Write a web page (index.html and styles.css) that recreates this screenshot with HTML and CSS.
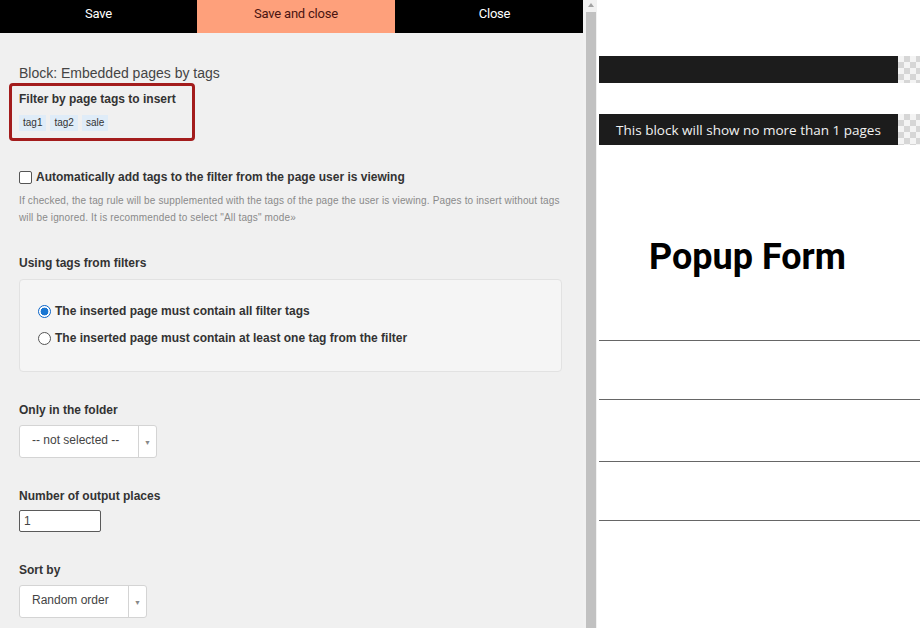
FILE: index.html
```html
<!DOCTYPE html>
<html>
<head>
<meta charset="utf-8">
<link rel="stylesheet" href="styles.css">
</head>
<body>
<div class="app">
  <div class="editor">
    <div class="toolbar">
      <div class="tb-btn">Save</div>
      <div class="tb-btn tb-accent">Save and close</div>
      <div class="tb-btn tb-close">Close</div>
    </div>
    <div class="content">
      <div class="block-title">Block: Embedded pages by tags</div>
      <div class="filter-box">
        <div class="label">Filter by page tags to insert</div>
        <div class="tags">
          <span class="tag">tag1</span>
          <span class="tag">tag2</span>
          <span class="tag">sale</span>
        </div>
      </div>

      <label class="check-row">
        <span class="checkbox"></span>
        <span class="label">Automatically add tags to the filter from the page user is viewing</span>
      </label>
      <p class="hint">If checked, the tag rule will be supplemented with the tags of the page the user is viewing. Pages to insert without tags will be ignored. It is recommended to select "All tags" mode»</p>

      <div class="label section-label">Using tags from filters</div>
      <div class="radio-box">
        <div class="radio-row">
          <span class="radio radio-on"></span>
          <span class="label">The inserted page must contain all filter tags</span>
        </div>
        <div class="radio-row">
          <span class="radio"></span>
          <span class="label">The inserted page must contain at least one tag from the filter</span>
        </div>
      </div>

      <div class="label field-label">Only in the folder</div>
      <div class="select select-folder">
        <span class="select-text">-- not selected --</span>
        <span class="select-arrow">▼</span>
      </div>

      <div class="label field-label">Number of output places</div>
      <div class="num-input">1</div>

      <div class="label field-label">Sort by</div>
      <div class="select select-sort">
        <span class="select-text">Random order</span>
        <span class="select-arrow">▼</span>
      </div>
    </div>
  </div>

  <div class="scrollbar">
    <div class="sb-arrow"></div>
    <div class="sb-thumb"></div>
  </div>

  <div class="preview">
    <div class="pv-row pv-row1">
      <div class="pv-bar"></div>
      <div class="checker"></div>
    </div>
    <div class="pv-row pv-row2">
      <div class="pv-bar pv-bar-text">This block will show no more than 1 pages</div>
      <div class="checker"></div>
    </div>
    <h1 class="pv-title">Popup Form</h1>
    <div class="pv-lines">
      <div class="pv-line"></div>
      <div class="pv-line pv-line2"></div>
      <div class="pv-line pv-line3"></div>
      <div class="pv-line pv-line4"></div>
    </div>
  </div>
</div>
</body>
</html>
```

FILE: styles.css
```css
* { box-sizing: border-box; }
html, body { margin: 0; padding: 0; }
body {
  width: 920px;
  height: 628px;
  overflow: hidden;
  font-family: "Liberation Sans", Arial, sans-serif;
  color: #333;
  background: #fff;
}
.app {
  display: flex;
  height: 628px;
}
.editor {
  width: 583px;
  flex: none;
  background: #f0f0f0;
  display: flex;
  flex-direction: column;
}
.toolbar {
  display: flex;
  height: 33px;
  background: #000;
}
.tb-btn {
  flex: 1;
  display: flex;
  align-items: center;
  justify-content: center;
  font-family: Roboto, "Liberation Sans", sans-serif;
  font-size: 13px;
  color: #fff;
  padding-bottom: 6px;
  letter-spacing: -0.2px;
}
.tb-btn:first-child { flex: 0 0 197px; }
.tb-btn.tb-accent {
  flex: 0 0 198px;
  background: #fea07b;
  color: #4a1410;
}
.tb-btn.tb-close { padding-left: 11px; }
.content {
  padding: 32px 20px 0 19px;
}
.block-title {
  font-size: 14px;
  line-height: 16px;
  color: #444;
}
.label {
  font-size: 12px;
  font-weight: bold;
  line-height: 14px;
  color: #333;
}
.filter-box {
  margin: 2px 0 0 -10px;
  width: 186px;
  border: 3px solid #a31c1c;
  border-radius: 4px;
  padding: 6px 7px 7px 7px;
}
.tags {
  display: flex;
  gap: 4px;
  margin-top: 9px;
}
.tag {
  background: #dfecf8;
  font-size: 10px;
  line-height: 16px;
  padding: 0 4px;
  color: #333;
}
.check-row {
  display: flex;
  align-items: center;
  margin-top: 29px;
  gap: 4px;
}
.checkbox {
  width: 13px;
  height: 13px;
  border: 1px solid #555;
  border-radius: 2px;
  background: #fff;
  flex: none;
}
.hint {
  margin: 8px 0 0 0;
  font-size: 10px;
  line-height: 17px;
  letter-spacing: 0.15px;
  color: #8a8a8a;
  width: 545px;
}
.section-label {
  margin-top: 30px;
}
.radio-box {
  margin-top: 9px;
  width: 543px;
  height: 93px;
  background: #f5f5f5;
  border: 1px solid #e2e2e2;
  border-radius: 4px;
  padding: 24px 0 0 18px;
}
.radio-row {
  display: flex;
  align-items: center;
  gap: 4px;
  height: 14px;
  margin-bottom: 13px;
}
.radio {
  width: 13px;
  height: 13px;
  border-radius: 50%;
  border: 1px solid #555;
  background: #fff;
  flex: none;
}
.radio.radio-on {
  border: 1px solid #0a64c8;
  background: radial-gradient(circle, #1976d2 0 3.6px, #fff 4.2px);
}
.field-label { margin-top: 31px; }
.select {
  margin-top: 8px;
  height: 33px;
  background: #fff;
  border: 1px solid #d4d4d4;
  border-radius: 3px;
  display: flex;
  align-items: stretch;
}
.select-folder { width: 138px; }
.select-sort { width: 128px; }
.select-text {
  flex: 1;
  font-size: 12px;
  color: #444;
  padding: 7px 0 0 12px;
  border-right: 1px solid #d4d4d4;
}
.select-arrow {
  width: 17px;
  flex: none;
  font-size: 7px;
  color: #888;
  display: flex;
  align-items: center;
  justify-content: center;
  padding-top: 2px;
}
.num-input {
  margin-top: 7px;
  width: 82px;
  height: 22px;
  border: 1px solid #5a5a5a;
  border-radius: 2px;
  background: #fff;
  font-size: 12px;
  color: #444;
  padding: 3px 0 0 4px;
}
.scrollbar {
  width: 14px;
  flex: none;
  background: #f1f1f1;
  position: relative;
  padding: 12px 1px 0 3px;
}
.sb-arrow {
  position: absolute;
  top: 3px;
  left: 5px;
  width: 0;
  height: 0;
  border-left: 3px solid transparent;
  border-right: 3px solid transparent;
  border-bottom: 4px solid #a3a3a3;
}
.sb-thumb {
  height: 100%;
  background: #c1c1c1;
}
.preview {
  flex: 1;
  background: #fff;
  padding: 56px 0 0 2px;
}
.pv-row {
  display: flex;
}
.pv-row1 { height: 27px; }
.pv-row2 { height: 31px; margin-top: 31px; }
.pv-bar {
  flex: 1;
  background: #1c1c1c;
}
.pv-bar-text {
  display: flex;
  align-items: center;
  justify-content: center;
  font-family: "Open Sans", sans-serif;
  font-size: 13.5px;
  color: #f2f2f2;
  padding-top: 1px;
}
.checker {
  width: 22px;
  flex: none;
  background-color: #f4f4f4;
  background-image:
    linear-gradient(45deg, #d6d6d6 25%, transparent 25%, transparent 75%, #d6d6d6 75%),
    linear-gradient(45deg, #d6d6d6 25%, transparent 25%, transparent 75%, #d6d6d6 75%);
  background-size: 12px 12px;
  background-position: 0 0, 6px 6px;
}
.pv-title {
  margin: 92px 0 0 0;
  text-align: center;
  font-family: Roboto, sans-serif;
  font-weight: bold;
  font-size: 36px;
  line-height: 40px;
  color: #000;
  padding-right: 24px;
}
.pv-lines {
  margin-top: 63px;
}
.pv-line {
  height: 1px;
  background: #666;
}
.pv-line2 { margin-top: 58px; }
.pv-line3 { margin-top: 61px; }
.pv-line4 { margin-top: 58px; }
```
